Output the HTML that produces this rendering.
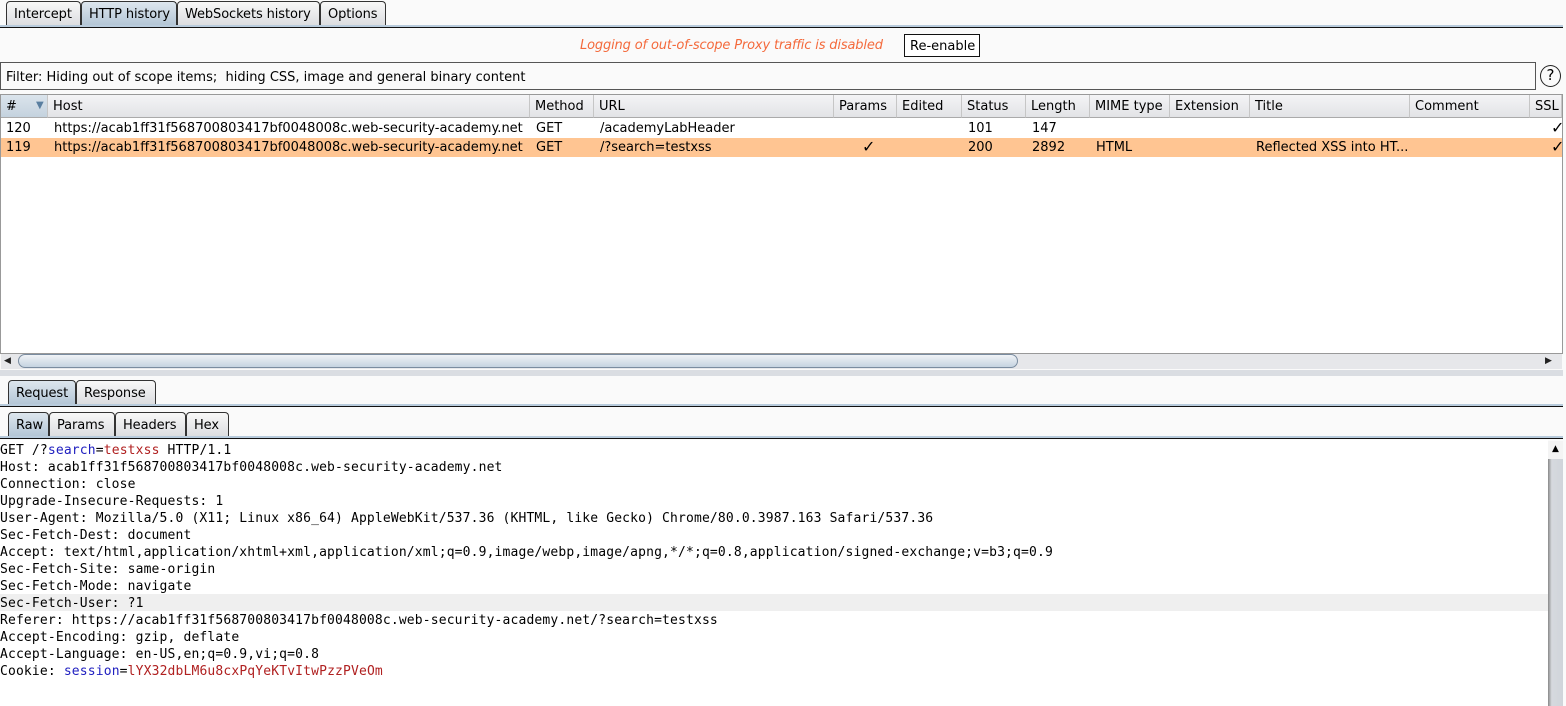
<!DOCTYPE html><html><head><style>
*{margin:0;padding:0;box-sizing:border-box}
body{width:1566px;height:706px;background:#fafafa;font-family:"DejaVu Sans","Liberation Sans",sans-serif;font-size:13px;color:#000;position:relative;overflow:hidden}
.a{position:absolute;white-space:nowrap}
.tab{position:absolute;height:24px;border:1px solid #333;border-bottom:none;border-radius:4px 4px 0 0;background:linear-gradient(#f8f8f8,#dcdde0);padding:5px 0 0 7px;font-size:13px;white-space:nowrap;letter-spacing:-0.1px}
.tab.s{background:linear-gradient(#dde6ee,#b4c6d6)}
.line{position:absolute;left:0;width:1563px;height:3px;background:#b8cbdc;border-bottom:1px solid #111}
.hd{position:absolute;top:95px;height:23px;border-right:1px solid #c6c6c6;border-bottom:1px solid #aaa;background:linear-gradient(#f4f4f6,#e2e3e6);padding:4px 0 0 5px;white-space:nowrap;overflow:hidden}
.c{position:absolute;padding-left:5px;top:2px}
.ck{font-size:16px;top:-1px}
.mono{font-family:"DejaVu Sans Mono","Liberation Mono",monospace;font-size:13px;position:absolute;left:0;white-space:pre;letter-spacing:0.15px}
</style></head><body>
<div class="tab" style="left:6px;top:1px;width:75px">Intercept</div>
<div class="tab s" style="left:81px;top:1px;width:96px">HTTP history</div>
<div class="tab" style="left:177px;top:1px;width:143px">WebSockets history</div>
<div class="tab" style="left:320px;top:1px;width:66px">Options</div>
<div class="line" style="top:25px"></div>
<div class="a" style="left:580px;top:38px;color:#f46a3c;font-style:italic;letter-spacing:-0.15px">Logging of out-of-scope Proxy traffic is disabled</div>
<div class="a" style="left:904px;top:34px;width:76px;height:23px;border:1px solid #111;background:#fff;padding:4px 0 0 5px">Re-enable</div>
<div class="a" style="left:0;top:62px;width:1536px;height:28px;border:1px solid #555;background:#fafafa;padding:7px 0 0 5px">Filter: Hiding out of scope items;&nbsp; hiding CSS, image and general binary content</div>
<div class="a" style="left:1540px;top:65px;width:21px;height:22px;border:1.5px solid #222;border-radius:50%;text-align:center;font-size:15px;line-height:19px">?</div>
<div class="a" style="left:0;top:94px;width:1563px;height:260px;background:#fff;border:1px solid #999"></div>
<div class="hd" style="left:1px;width:47px;background:linear-gradient(#dbe4ec,#c4d2de)"># <span style="position:absolute;left:35px;top:5px;color:#5a7fa0;font-size:10px">▼</span></div>
<div class="hd" style="left:48px;width:482px">Host</div>
<div class="hd" style="left:530px;width:64px">Method</div>
<div class="hd" style="left:594px;width:240px">URL</div>
<div class="hd" style="left:834px;width:63px">Params</div>
<div class="hd" style="left:897px;width:65px">Edited</div>
<div class="hd" style="left:962px;width:64px">Status</div>
<div class="hd" style="left:1026px;width:64px">Length</div>
<div class="hd" style="left:1090px;width:80px">MIME type</div>
<div class="hd" style="left:1170px;width:80px">Extension</div>
<div class="hd" style="left:1250px;width:160px">Title</div>
<div class="hd" style="left:1410px;width:120px">Comment</div>
<div class="hd" style="left:1530px;width:32px">SSL</div>
<div class="a" style="left:1px;top:119px;width:1561px;height:19px">
<span class="c" style="left:0">120</span><span class="c" style="left:48px">https://acab1ff31f568700803417bf0048008c.web-security-academy.net</span><span class="c" style="left:530px">GET</span><span class="c" style="left:594px">/academyLabHeader</span><span class="c" style="left:962px">101</span><span class="c" style="left:1026px">147</span><span class="c ck" style="left:1545px">✓</span></div>
<div class="a" style="left:1px;top:138px;width:1561px;height:19px;background:#ffc592">
<span class="c" style="left:0">119</span><span class="c" style="left:48px">https://acab1ff31f568700803417bf0048008c.web-security-academy.net</span><span class="c" style="left:530px">GET</span><span class="c" style="left:594px">/?search=testxss</span><span class="c ck" style="left:856px">✓</span><span class="c" style="left:962px">200</span><span class="c" style="left:1026px">2892</span><span class="c" style="left:1090px">HTML</span><span class="c" style="left:1250px">Reflected XSS into HT...</span><span class="c ck" style="left:1545px">✓</span></div>
<div class="a" style="left:1px;top:353px;width:1561px;height:16px;background:#e6e7ea;border-top:1px solid #999"></div>
<div class="a" style="left:4px;top:356px;font-size:9px;color:#222">◀</div>
<div class="a" style="left:18px;top:354px;width:1000px;height:14px;border-radius:8px;background:linear-gradient(#f0f3f7,#c5d3e0);border:1px solid #7a8ca0"></div>
<div class="a" style="left:1545px;top:356px;font-size:9px;color:#222">▶</div>
<div class="a" style="left:0;top:370px;width:1563px;height:6px;background:#dadde2"></div>
<div class="tab s" style="left:8px;top:380px;width:68px">Request</div>
<div class="tab" style="left:76px;top:380px;width:80px">Response</div>
<div class="line" style="top:404px"></div>
<div class="tab s" style="left:8px;top:412px;width:41px">Raw</div>
<div class="tab" style="left:49px;top:412px;width:66px">Params</div>
<div class="tab" style="left:115px;top:412px;width:71px">Headers</div>
<div class="tab" style="left:186px;top:412px;width:43px">Hex</div>
<div class="line" style="top:436px"></div>
<div class="a" style="left:0;top:440px;width:1548px;height:266px;background:#fff"></div>
<div class="a" style="left:0;top:594px;width:1548px;height:17px;background:#efefef"></div>
<div class="a" style="left:1548px;top:441px;width:15px;height:265px;background:linear-gradient(90deg,#888,#d6d9de 25%,#d0d4da)"></div>
<div class="a" style="left:1548px;top:441px;width:15px;height:18px;background:#f4f4f4;font-size:9px;text-align:center;padding-top:3px">▲</div>
<div class="mono" style="top:442px;line-height:17px">GET /?<span style="color:#2020c0">search</span>=<span style="color:#b02020">testxss</span> HTTP/1.1
Host: acab1ff31f568700803417bf0048008c.web-security-academy.net
Connection: close
Upgrade-Insecure-Requests: 1
User-Agent: Mozilla/5.0 (X11; Linux x86_64) AppleWebKit/537.36 (KHTML, like Gecko) Chrome/80.0.3987.163 Safari/537.36
Sec-Fetch-Dest: document
Accept: text/html,application/xhtml+xml,application/xml;q=0.9,image/webp,image/apng,*/*;q=0.8,application/signed-exchange;v=b3;q=0.9
Sec-Fetch-Site: same-origin
Sec-Fetch-Mode: navigate
Sec-Fetch-User: ?1
Referer: https://acab1ff31f568700803417bf0048008c.web-security-academy.net/?search=testxss
Accept-Encoding: gzip, deflate
Accept-Language: en-US,en;q=0.9,vi;q=0.8
Cookie: <span style="color:#2020c0">session</span>=<span style="color:#b02020">lYX32dbLM6u8cxPqYeKTvItwPzzPVeOm</span></div>
</body></html>
